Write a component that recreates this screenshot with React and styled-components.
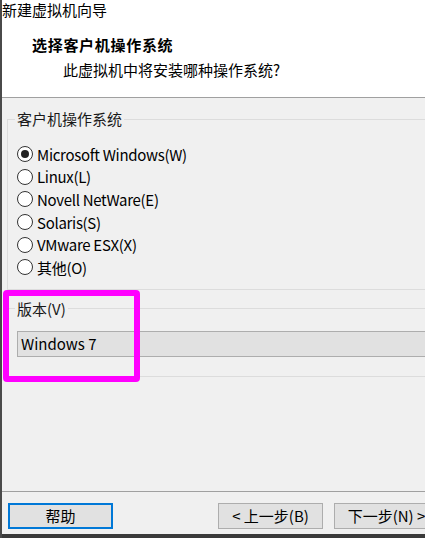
import React from 'react';
import styled, { createGlobalStyle } from 'styled-components';

const GlobalStyle = createGlobalStyle`
  html, body {
    margin: 0;
    padding: 0;
    width: 425px;
    height: 538px;
    overflow: hidden;
    background: #f0f0f0;
  }
  * { box-sizing: border-box; }
`;

const Window = styled.div`
  width: 450px;
  height: 538px;
  display: flex;
  flex-direction: column;
  border-left: 2px solid #4a4a4a;
  font-family: "Noto Sans CJK SC", "Noto Sans", sans-serif;
  font-size: 15px;
  color: #000;
  background: #f0f0f0;
`;

const TitleBar = styled.div`
  height: 20px;
  line-height: 20px;
  background: #fff;
  white-space: nowrap;
`;

const Header = styled.div`
  background: #fff;
  padding: 15px 0 17px 30px;
  border-bottom: 1px solid #a0a0a0;
  display: flex;
  flex-direction: column;
  gap: 5px;
`;

const Heading = styled.div`
  font-weight: bold;
  line-height: 20px;
  letter-spacing: 0.7px;
`;

const Subtitle = styled.div`
  line-height: 20px;
  padding-left: 31px;
`;

const Body = styled.div`
  flex: 1;
  position: relative;
  padding: 12px 7px 0 5px;
`;

const GroupBox = styled.fieldset`
  margin: 0;
  margin-top: ${p => p.$gap || 0}px;
  border: 1px solid #dcdcdc;
  padding: ${p => p.$pad};
  min-width: 0;
`;

const Legend = styled.legend`
  padding: 0 2px;
  margin-left: -2px;
  line-height: 18px;
  color: #1a1a1a;
`;

const RadioList = styled.div`
  display: flex;
  flex-direction: column;
`;

const RadioRow = styled.div`
  height: 22.6px;
  display: flex;
  align-items: center;
  gap: 4px;
  white-space: nowrap;
  letter-spacing: -0.3px;
`;

const RadioCircle = styled.span`
  width: 16px;
  height: 16px;
  border-radius: 50%;
  border: 1px solid #333;
  background: #fff;
  display: flex;
  align-items: center;
  justify-content: center;
  flex-shrink: 0;
  &::after {
    content: "";
    width: 8px;
    height: 8px;
    border-radius: 50%;
    background: ${p => (p.$checked ? '#222' : 'transparent')};
  }
`;

const Combo = styled.div`
  height: 26px;
  line-height: 24px;
  border: 1px solid #adadad;
  background: #e1e1e1;
  padding-left: 3px;
`;

const Highlight = styled.div`
  position: absolute;
  left: 1px;
  top: 192px;
  width: 137px;
  height: 92px;
  border: 6px solid #ff00ff;
  border-radius: 4px;
  pointer-events: none;
`;

const Footer = styled.div`
  border-top: 1px solid #a0a0a0;
  padding: 11px 11px 5px 6px;
  display: flex;
  gap: 11px;
`;

const Button = styled.div`
  width: 105px;
  height: 26px;
  text-align: center;
  background: #e1e1e1;
  border: ${p => (p.$focused ? '2px solid #0078d7' : '1px solid #adadad')};
  line-height: ${p => (p.$focused ? 22 : 24)}px;
  white-space: nowrap;
  margin-right: ${p => (p.$push ? 'auto' : 0)};
`;

const Taskbar = styled.div`
  height: 4px;
  background: #3a3a3a;
`;

const osList = [
  { label: 'Microsoft Windows(W)', checked: true },
  { label: 'Linux(L)' },
  { label: 'Novell NetWare(E)' },
  { label: 'Solaris(S)' },
  { label: 'VMware ESX(X)' },
  { label: '其他(O)' },
];

const App = () => (
  <>
    <GlobalStyle />
    <Window>
      <TitleBar>新建虚拟机向导</TitleBar>
      <Header>
        <Heading>选择客户机操作系统</Heading>
        <Subtitle>此虚拟机中将安装哪种操作系统?</Subtitle>
      </Header>
      <Body>
        <GroupBox $pad="15px 9px 10px 9px">
          <Legend>客户机操作系统</Legend>
          <RadioList>
            {osList.map((os, i) => (
              <RadioRow key={i}>
                <RadioCircle $checked={os.checked} />
                {os.label}
              </RadioRow>
            ))}
          </RadioList>
        </GroupBox>
        <GroupBox $gap={10} $pad="13px 0 19px 9px">
          <Legend>版本(V)</Legend>
          <Combo>Windows 7</Combo>
        </GroupBox>
        <Highlight />
      </Body>
      <Footer>
        <Button $focused $push>帮助</Button>
        <Button>&lt; 上一步(B)</Button>
        <Button>下一步(N) &gt;</Button>
      </Footer>
      <Taskbar />
    </Window>
  </>
);

export default App;
